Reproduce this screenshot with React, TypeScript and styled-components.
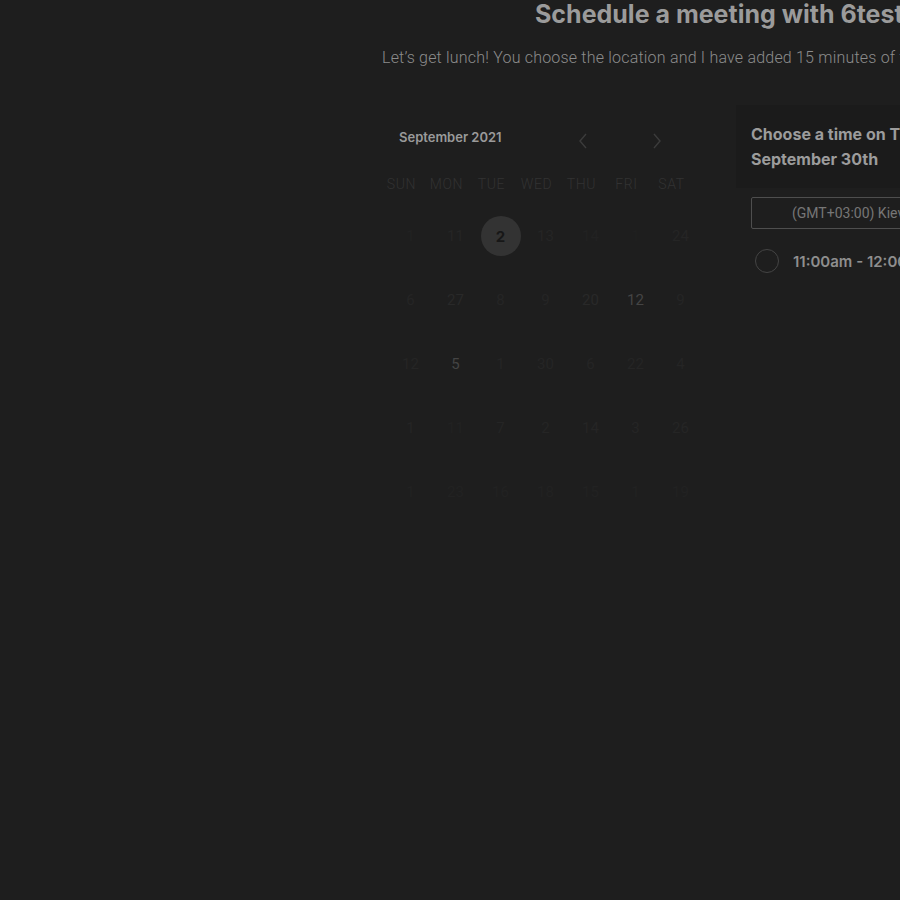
import React from "react";
import styled, { createGlobalStyle } from "styled-components";

const Global = createGlobalStyle`
  html, body { margin: 0; padding: 0; background: #1e1e1e; overflow: hidden; }
  * { box-sizing: border-box; }
`;

const Page = styled.div`
  width: 900px;
  height: 900px;
  background: #1e1e1e;
  overflow: hidden;
  font-family: Inter, "Noto Sans", sans-serif;
`;

const Header = styled.header`
  display: flex;
  flex-direction: column;
  white-space: nowrap;
`;

const Title = styled.h1`
  margin: 0;
  padding-left: 535px;
  font-size: 25px;
  line-height: 29px;
  font-weight: 700;
  color: #9b9b9b;
`;

const Subtitle = styled.p`
  margin: 18px 0 0;
  padding-left: 382px;
  font-family: Roboto, sans-serif;
  font-weight: 300;
  font-size: 16px;
  letter-spacing: 0.2px;
  line-height: 22px;
  color: #8c8c8c;
`;

const Body = styled.main`
  display: flex;
  margin-top: 36px;
  padding-left: 379px;
`;

const Calendar = styled.section`
  width: 357px;
  flex-shrink: 0;
  display: flex;
  flex-direction: column;
`;

const MonthBar = styled.div`
  display: flex;
  align-items: center;
  height: 32px;
  margin-top: 16px;
  padding-left: 20px;
`;

const MonthLabel = styled.span`
  font-size: 13px;
  font-weight: 600;
  color: #9a9a9a;
  width: 176px;
`;

const Arrow = styled.button<{ $gap?: number }>`
  background: none;
  border: none;
  padding: 0;
  margin-left: ${(p) => p.$gap ?? 0}px;
  margin-top: 8px;
  width: 16px;
  height: 16px;
  display: flex;
  align-items: center;
  justify-content: center;
  color: #3c3c3c;
`;

const Weekdays = styled.div`
  display: grid;
  grid-template-columns: repeat(7, 45px);
  margin-top: 21px;
  height: 20px;
  align-items: center;
`;

const Weekday = styled.span`
  text-align: center;
  font-family: Roboto, sans-serif;
  font-weight: 300;
  font-size: 14px;
  letter-spacing: 0.6px;
  color: #323232;
`;

const Days = styled.div`
  display: grid;
  grid-template-columns: repeat(7, 45px);
  grid-auto-rows: 64px;
  margin-top: 10px;
  margin-left: 9px;
`;

const Cell = styled.div`
  display: flex;
  align-items: center;
  justify-content: center;
`;

const Day = styled.span<{ $tone: string }>`
  font-family: Roboto, sans-serif;
  font-size: 15px;
  font-weight: 400;
  color: ${(p) => p.$tone};
`;

const Selected = styled.span`
  width: 40px;
  height: 40px;
  border-radius: 50%;
  background: #333333;
  display: flex;
  align-items: center;
  justify-content: center;
  font-size: 15px;
  font-weight: 700;
  color: #171717;
`;

const TimePanel = styled.section`
  width: 420px;
  flex-shrink: 0;
  display: flex;
  flex-direction: column;
`;

const HeadingBox = styled.div`
  background: #1b1b1b;
  padding: 17px 15px 16px;
`;

const Heading = styled.h2`
  margin: 0;
  font-size: 16px;
  line-height: 25px;
  font-weight: 700;
  color: #9c9c9c;
  width: 260px;
`;

const Options = styled.div`
  padding-left: 15px;
  display: flex;
  flex-direction: column;
`;

const Select = styled.div`
  margin-top: 9px;
  height: 32px;
  border: 1px solid #4e4e4e;
  border-radius: 2px;
  display: flex;
  align-items: center;
  padding-left: 40px;
  font-family: Roboto, sans-serif;
  font-size: 14px;
  color: #767676;
  white-space: nowrap;
`;

const Slot = styled.label`
  display: flex;
  align-items: center;
  margin-top: 20px;
  margin-left: 4px;
  gap: 14px;
`;

const Radio = styled.span`
  width: 24px;
  height: 24px;
  border-radius: 50%;
  border: 1.5px solid #444444;
`;

const SlotText = styled.span`
  font-size: 15px;
  font-weight: 600;
  color: #8e8e8e;
  white-space: nowrap;
`;

const weekdays = ["SUN", "MON", "TUE", "WED", "THU", "FRI", "SAT"];

type D = { n: string; t: string; sel?: boolean };
const f1 = "#222222";
const f2 = "#252525";
const f3 = "#292929";
const hi = "#444444";

const rows: D[][] = [
  [{ n: "1", t: f1 }, { n: "11", t: f2 }, { n: "2", t: "", sel: true }, { n: "13", t: f2 }, { n: "14", t: f1 }, { n: "1", t: "#202020" }, { n: "24", t: f2 }],
  [{ n: "6", t: f2 }, { n: "27", t: f3 }, { n: "8", t: f2 }, { n: "9", t: f2 }, { n: "20", t: f3 }, { n: "12", t: hi }, { n: "9", t: f2 }],
  [{ n: "12", t: f2 }, { n: "5", t: hi }, { n: "1", t: f2 }, { n: "30", t: f2 }, { n: "6", t: f2 }, { n: "22", t: f2 }, { n: "4", t: f2 }],
  [{ n: "1", t: f2 }, { n: "11", t: f1 }, { n: "7", t: f2 }, { n: "2", t: f2 }, { n: "14", t: f2 }, { n: "3", t: f2 }, { n: "26", t: f2 }],
  [{ n: "1", t: f1 }, { n: "23", t: f1 }, { n: "16", t: f1 }, { n: "18", t: f1 }, { n: "15", t: f1 }, { n: "1", t: f1 }, { n: "19", t: f1 }],
];

const Chevron = ({ dir }: { dir: "l" | "r" }) => (
  <svg width="10" height="16" viewBox="0 0 10 16" fill="none">
    <path
      d={dir === "l" ? "M8 1 L2 8 L8 15" : "M2 1 L8 8 L2 15"}
      stroke="currentColor"
      strokeWidth="1.4"
    />
  </svg>
);

export default function App() {
  return (
    <Page>
      <Global />
      <Header>
        <Title>Schedule a meeting with 6testuser</Title>
        <Subtitle>
          Let’s get lunch! You choose the location and I have added 15 minutes of travel time.
        </Subtitle>
      </Header>
      <Body>
        <Calendar>
          <MonthBar>
            <MonthLabel>September 2021</MonthLabel>
            <Arrow aria-label="previous month">
              <Chevron dir="l" />
            </Arrow>
            <Arrow $gap={58} aria-label="next month">
              <Chevron dir="r" />
            </Arrow>
          </MonthBar>
          <Weekdays>
            {weekdays.map((w) => (
              <Weekday key={w}>{w}</Weekday>
            ))}
          </Weekdays>
          <Days>
            {rows.flat().map((d, i) => (
              <Cell key={i}>
                {d.sel ? <Selected>{d.n}</Selected> : <Day $tone={d.t}>{d.n}</Day>}
              </Cell>
            ))}
          </Days>
        </Calendar>
        <TimePanel>
          <HeadingBox>
            <Heading>Choose a time on Thursday, September 30th</Heading>
          </HeadingBox>
          <Options>
            <Select>(GMT+03:00) Kiev, Ukraine</Select>
            <Slot>
              <Radio />
              <SlotText>11:00am - 12:00pm</SlotText>
            </Slot>
          </Options>
        </TimePanel>
      </Body>
    </Page>
  );
}
